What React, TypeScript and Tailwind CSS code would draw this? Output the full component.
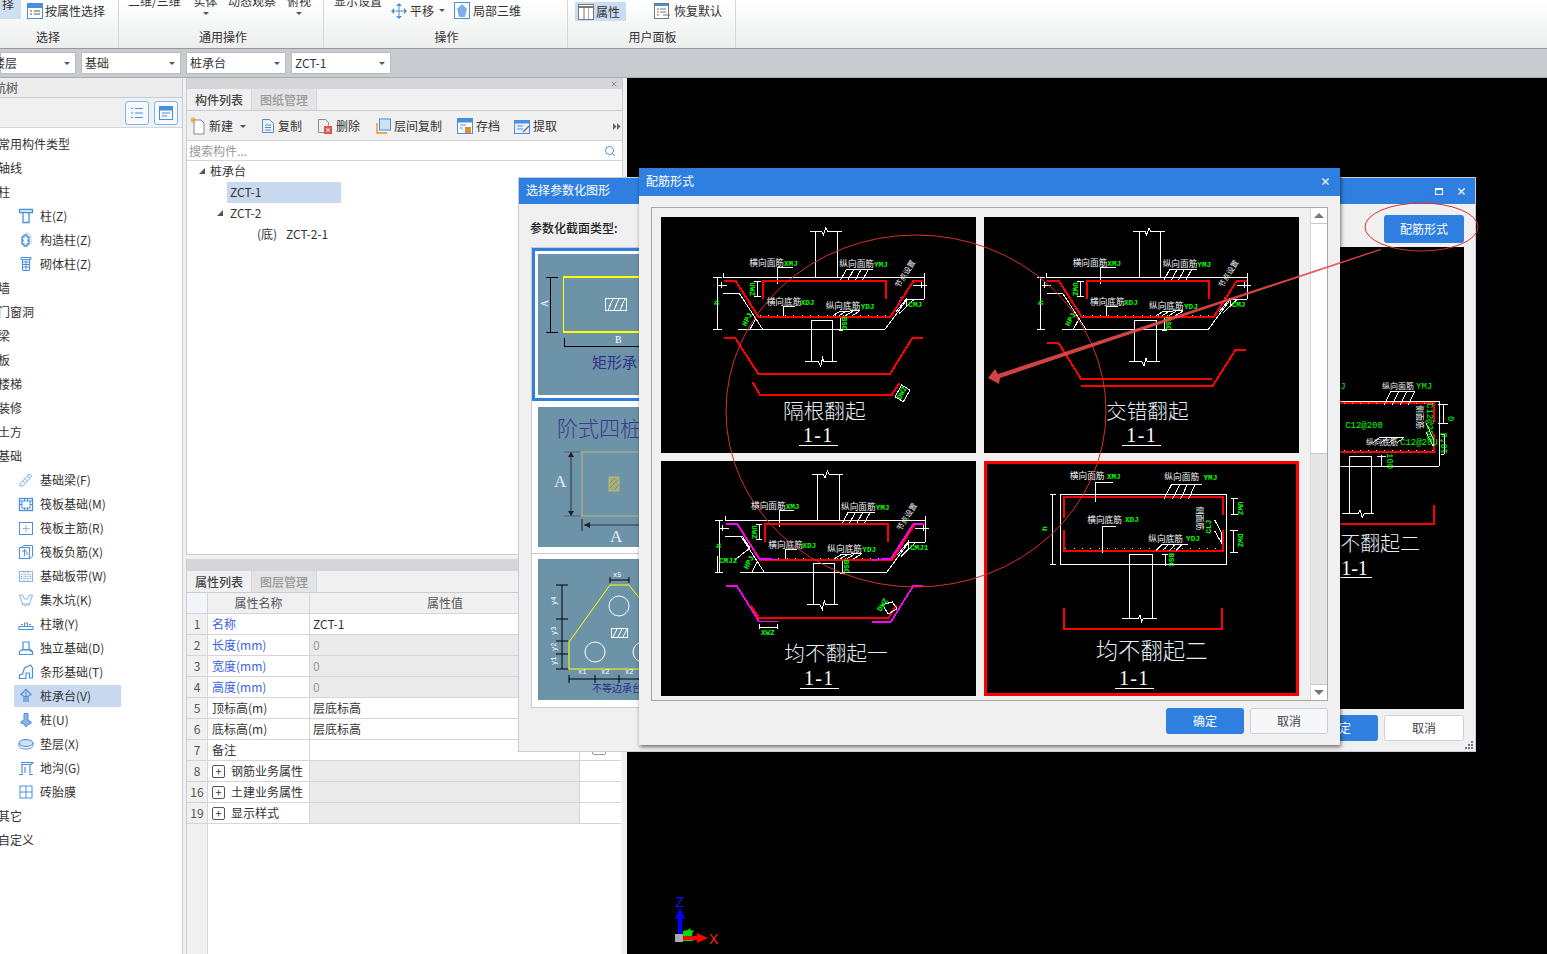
import React from "react";
import { X, Search } from "lucide-react";

const BLUE = "#4a90d9";
type IP = { children: React.ReactNode; s?: number };
const Ic = ({ children, s = 16 }: IP) => (
  <svg width={s} height={s} viewBox="0 0 16 16" fill="none" stroke={BLUE} strokeWidth="1" className="shrink-0">{children}</svg>
);

const navIcons: Record<string, React.ReactNode> = {
  zhu: <path d="M1.5 1.5h13v3h-13zM4 4.5h8M5 4.5v10h6v-10" strokeWidth="1.3" />,
  gz: <><path d="M6 3h3v2h2v3h-1v1h1v3H9v2H6v-2H4V9h1V8H4V5h2z" strokeWidth="1.3" /><path d="M7 1h3l3 3v8" stroke="#b8d0ec" /></>,
  qt: <><path d="M3 1.5h10v2H3zM4.5 3.5h7v11h-7z" /><path d="M4.5 6h7M4.5 8.5h7M4.5 11h7M8 3.5v11" /></>,
  jcl: <path d="M2 12l9-10 3 2-9 10H2zM9 4l3 2M6.5 7l3 2M4.5 9l3 2" stroke="#8ab4e4" />,
  kb: <><rect x="1.5" y="2.5" width="13" height="12" strokeWidth="1.3" /><rect x="4" y="5" width="8" height="7" /><path d="M1.5 5H4M1.5 8.5H4M12 5h2.5M12 8.5h2.5M6.5 2.5V5M9.5 2.5V5M6.5 12v2.5M9.5 12v2.5" /></>,
  zj: <><rect x="1.5" y="2.5" width="13" height="12" /><path d="M8 5v7M4.5 8.5h7" stroke="#8ab4e4" /></>,
  fj: <><rect x="1.5" y="3.5" width="10" height="11" /><path d="M3.5 3.5l2-2h9v11l-3 2M4 7h5M6.5 5v7M9 8v3" /></>,
  bd: <><rect x="1.5" y="3.5" width="13" height="10" stroke="#8ab4e4" /><path d="M6 3.5v10M10 3.5v10M3.5 6v5M8 6v5M12.5 6v5" strokeDasharray="1 1" /></>,
  jsk: <><path d="M1.5 3h3l2 4h3l2-4h3M1.5 3l3 9h7l3-9" stroke="#8ab4e4" /><path d="M4 12c2 2 6 2 8 0" strokeDasharray="1 1" /></>,
  zd: <><rect x="1" y="10.5" width="14" height="3" /><path d="M5 10.5h6M6.5 10.5V7h3v3.5M3 8.5h2M11 8.5h2" /></>,
  dl: <><path d="M5 2h6v8H5zM1.5 14.5v-3l3-2h8l2 2v3zM11 10l3.5 2" strokeWidth="1.2" /></>,
  tx: <path d="M1.5 14.5V11l3-1 2-6 6-3 2 3v10h-3V9H8v5.5z" strokeWidth="1.2" />,
  zct: <><path d="M8 1.5l5 5-3 2H6l-3-2zM6 9v5M10 9v5M8 4v10" strokeWidth="1.2" /></>,
  z: <path d="M6 1.5h4v7l3 1v2l-3 1-2 2.5L6 12l-3-1V9.500l3-1z" fill="#8ab4e4" />,
  dc: <><ellipse cx="8" cy="7" rx="7" ry="3.500" fill="#cfe0f3" /><path d="M1 7v2.500C1 11.500 4 13 8 13s7-1.500 7-3.500V7" /></>,
  dg: <><path d="M3 4.500h10M3 2.500h12l-2 2M4 4.500v9M12 4.500v9M1 14.500h4M11 14.500h4M7 7v6" strokeWidth="1.2" /></>,
  ztm: <><rect x="2" y="2" width="12" height="12" /><path d="M8 2v12M2 8h12" /></>,
};

const tree: [string, string, string?][] = [
  ["t", "常用构件类型"], ["t", "轴线"], ["t", "柱"],
  ["s", "柱(Z)", "zhu"], ["s", "构造柱(Z)", "gz"], ["s", "砌体柱(Z)", "qt"],
  ["t", "墙"], ["t", "门窗洞"], ["t", "梁"], ["t", "板"], ["t", "楼梯"], ["t", "装修"], ["t", "土方"], ["t", "基础"],
  ["s", "基础梁(F)", "jcl"], ["s", "筏板基础(M)", "kb"], ["s", "筏板主筋(R)", "zj"], ["s", "筏板负筋(X)", "fj"],
  ["s", "基础板带(W)", "bd"], ["s", "集水坑(K)", "jsk"], ["s", "柱墩(Y)", "zd"], ["s", "独立基础(D)", "dl"],
  ["s", "条形基础(T)", "tx"], ["s", "桩承台(V)", "zct"], ["s", "桩(U)", "z"], ["s", "垫层(X)", "dc"],
  ["s", "地沟(G)", "dg"], ["s", "砖胎膜", "ztm"],
  ["t", "其它"], ["t", "自定义"],
];

const Arrow = () => <span className="inline-block w-0 h-0 border-x-[3px] border-x-transparent border-t-[3px] border-t-[#555]" />;

const Ribbon = () => (
  <div className="h-[49px] flex shrink-0 bg-gradient-to-b from-white to-[#eceeee] border-b-[1px] border-[#96999c] text-[12px] leading-[16px] text-[#333]">
    <div className="w-[119px] border-r border-[#d4d6d8] flex flex-col">
      <div className="h-[28px] flex items-start overflow-hidden">
        <div className="w-[21px] h-[23px] bg-[#cfe0f3] -mt-[4px] pl-[2px] overflow-hidden shrink-0">择</div>
        <svg width="16" height="16" viewBox="0 0 16 16" className="ml-[6px] mt-[3px] shrink-0"><rect x="0.500" y="0.500" width="15" height="15" fill="#fff" stroke={BLUE} /><rect x="1" y="1" width="14" height="4" fill={BLUE} /><path d="M3 8h2M7 8h6M3 11h2M7 11h6" stroke="#555" /></svg>
        <span className="ml-[1px] mt-[3px] pl-[1px]">按属性选择</span>
      </div>
      <div className="text-center pr-[22px] leading-[18px]">选择</div>
    </div>
    <div className="w-[205px] border-r border-[#d4d6d8] flex flex-col">
      <div className="h-[28px] flex items-start overflow-hidden pl-[9px] -mt-[7px]">
        <span className="w-[65px] shrink-0">二维/三维</span>
        <span className="w-[25px] mr-[10px] flex flex-col items-center shrink-0"><span>实体</span><span className="h-[3px]" /><Arrow /></span>
        <span className="w-[59px] shrink-0">动态观察</span>
        <span className="flex flex-col items-center"><span>俯视</span><span className="h-[3px]" /><Arrow /></span>
      </div>
      <div className="text-center pl-[4px] leading-[18px] mt-[7px]">通用操作</div>
    </div>
    <div className="w-[244px] border-r border-[#d4d6d8] flex flex-col">
      <div className="h-[28px] relative overflow-hidden pl-[10px] flex items-start">
        <span className="-mt-[7px] w-[57px] shrink-0">显示设置</span>
        <svg width="16" height="16" viewBox="0 0 16 16" className="mt-[3px] shrink-0" fill={BLUE}><path d="M8 0l3 3H5zM8 16l-3-3h6zM0 8l3-3v6zM16 8l-3 3V5z" /><path d="M8 3v10M3 8h10" stroke={BLUE} /></svg>
        <span className="ml-[3px] mt-[3px]">平移</span>
        <span className="ml-[5px] mt-[9px] flex"><Arrow /></span>
        <svg width="16" height="17" viewBox="0 0 16 17" className="ml-[9px] mt-[2px] shrink-0"><rect x="0.500" y="0.500" width="15" height="16" fill="#fff" stroke={BLUE} /><path d="M8 2l5 5-2 8H5L3 7z" fill="#7eaee4" /></svg>
        <span className="ml-[3px] mt-[3px]">局部三维</span>
      </div>
      <div className="text-center pl-[2px] leading-[18px]">操作</div>
    </div>
    <div className="w-[168px] border-r border-[#d4d6d8] flex flex-col">
      <div className="h-[28px] flex items-start pl-[7px]">
        <div className="w-[51px] h-[19px] mt-[2px] bg-[#c9dcf2] flex items-center pl-[3px] shrink-0">
          <svg width="16" height="16" viewBox="0 0 16 16"><rect x="0.500" y="0.500" width="15" height="15" fill="#fff" stroke="#777" /><path d="M1 3h14" stroke="#777" strokeWidth="2" /><path d="M6 4v11" stroke="#777" /><path d="M10.500 4v11" stroke="#aaa" /></svg>
          <span className="ml-[2px]">属性</span>
        </div>
        <svg width="17" height="16" viewBox="0 0 17 16" className="ml-[28px] mt-[3px] shrink-0"><rect x="0.500" y="0.500" width="14" height="15" fill="#fff" stroke="#777" /><path d="M1 2h13" stroke={BLUE} strokeWidth="2" /><path d="M3 6h2M6 6h6M3 9h2M6 9h6M3 12h2M9 12h7" stroke="#777" /></svg>
        <span className="ml-[3px] mt-[3px]">恢复默认</span>
      </div>
      <div className="text-center pl-[2px] leading-[18px]">用户面板</div>
    </div>
  </div>
);

const Sel = ({ w, t, cls = "" }: { w: string; t: string; cls?: string }) => (
  <div className={`${w} ${cls} h-[22px] bg-white border border-[#b8bbbf] flex items-center justify-between pl-[3px] pr-[5px] shrink-0 text-[12px] text-[#333]`}>
    <span>{t}</span><Arrow />
  </div>
);

const Nav = () => (
  <div className="w-[186px] shrink-0 pr-[3px] flex flex-col">
    <div className="flex-1 flex flex-col border-r border-[#c8ccd4] bg-white text-[12px] text-[#333]">
      <div className="h-[20px] shrink-0 bg-[#ececec] border-b border-[#c8ccd4] flex items-center -ml-[6px] font-medium text-[#666]">航树</div>
      <div className="h-[30px] shrink-0 bg-[#f0f0f0] border-b border-[#d4d6da] flex items-center justify-end pr-[4px] gap-[5px]">
        {[0, 1].map((i) => (
          <div key={i} className="w-[24px] h-[24px] rounded-[3px] border border-[#7eb4ea] bg-[#f6f9fd] flex items-center justify-center">
            {i === 0 ? (
              <svg width="14" height="14" viewBox="0 0 14 14" stroke={BLUE} fill="none"><path d="M5 2.500h8M5 7h8M5 11.500h8M1 2.500h2M1 7h2M1 11.500h2" /></svg>
            ) : (
              <svg width="14" height="14" viewBox="0 0 14 14" stroke={BLUE} fill="none"><rect x="0.500" y="0.500" width="13" height="13" /><rect x="1" y="1" width="12" height="3" fill={BLUE} /><path d="M3 7h8M3 10h5" /></svg>
            )}
          </div>
        ))}
      </div>
      <div className="pt-[4px] flex flex-col overflow-hidden">
        {tree.map(([k, t, ic]) =>
          k === "t" ? (
            <div key={t} className="h-[24px] shrink-0 flex items-center -ml-[2px]">{t}</div>
          ) : (
            <div key={t} className="h-[24px] shrink-0 flex items-center">
              <div className={`ml-[14px] w-[107px] h-[22px] flex items-center pl-[4px] ${t === "桩承台(V)" ? "bg-[#c7d8ef]" : ""}`}>
                <Ic>{navIcons[ic as string]}</Ic>
                <span className="ml-[6px] whitespace-nowrap">{t}</span>
              </div>
            </div>
          )
        )}
      </div>
    </div>
  </div>
);

const MidTool = () => (
  <div className="h-[30px] shrink-0 bg-[#f0f0f0] border-b border-[#d4d6da] flex items-center relative pl-[3px] pt-[1px] text-[12px] text-[#333]">
    <svg width="18" height="18" viewBox="0 0 18 18" fill="none"><path d="M4 3h7l3 3v11H4z" fill="#fff" stroke="#888" /><path d="M3 0v6M0 3h6M1 1l4 4M5 1L1 5" stroke="#e6a83c" /></svg>
    <span className="ml-[1px]">新建</span>
    <span className="ml-[7px] flex"><Arrow /></span>
    <svg width="16" height="16" viewBox="0 0 16 16" fill="none" className="ml-[14px] mr-[2px]" stroke={BLUE}><path d="M2.500 1.500h7l4 4v9h-11z" /><path d="M5 7h6M5 9.500h6M5 12h6" /></svg>
    <span>复制</span>
    <svg width="16" height="16" viewBox="0 0 16 16" fill="none" className="ml-[15px]" stroke="#888"><path d="M1.500 1.500h7l3 3v3M1.500 1.500v13h6" /><rect x="7" y="8" width="8" height="8" fill="#e05050" stroke="none" /><path d="M9 10l4 4M13 10l-4 4" stroke="#fff" /></svg>
    <span className="ml-[3px]">删除</span>
    <svg width="16" height="16" viewBox="0 0 16 16" fill="none" className="ml-[15px]"><path d="M2 5v10h10" stroke="#e68a2e" strokeWidth="1.300" /><rect x="4.500" y="1" width="11" height="11" fill="#cfe0f3" stroke={BLUE} /></svg>
    <span className="ml-[2px] pl-[1px]">层间复制</span>
    <svg width="16" height="16" viewBox="0 0 16 16" fill="none" className="ml-[15px]" stroke={BLUE}><rect x="0.500" y="0.500" width="15" height="15" fill="#fff" /><rect x="1" y="1" width="14" height="3" fill={BLUE} /><rect x="8" y="9" width="6" height="6" fill="#e68a2e" stroke="none" /><path d="M3 7h6M3 10h3" /></svg>
    <span className="ml-[3px]">存档</span>
    <svg width="16" height="16" viewBox="0 0 16 16" fill="none" className="ml-[14px]" stroke={BLUE}><rect x="0.500" y="2.500" width="15" height="13" fill="#eaf2fb" /><rect x="1" y="3" width="14" height="2" fill={BLUE} /><path d="M3 8h6M3 11h6" /><path d="M9 14l6-6" stroke="#777" strokeWidth="1.500" /></svg>
    <span className="ml-[3px]">提取</span>
    <svg width="8" height="7" viewBox="0 0 8 7" fill="#666" className="absolute right-[1px] top-[12px]"><path d="M0 0l3.500 3.500L0 7zM4 0l3.500 3.500L4 7z" /></svg>
  </div>
);

const Tabs = ({ a, b }: { a: string; b: string }) => (
  <div className="h-[22px] shrink-0 flex bg-[#f0f0f0] border-b border-[#c8ccd4] text-[12px] font-medium">
    <div className="w-[65px] text-center leading-[21px] text-[#444] border-r border-[#d4d6da]">{a}</div>
    <div className="w-[65px] text-center leading-[21px] text-[#999] bg-[#e4e4e4] border-r border-[#d4d6da]">{b}</div>
  </div>
);

const rows: [string, string, string, number, boolean?][] = [
  ["1", "名称", "ZCT-1", 0],
  ["2", "长度(mm)", "0", 1],
  ["3", "宽度(mm)", "0", 1],
  ["4", "高度(mm)", "0", 1],
  ["5", "顶标高(m)", "层底标高", 2],
  ["6", "底标高(m)", "层底标高", 2],
  ["7", "备注", "", 2],
  ["8", "钢筋业务属性", "", 3],
  ["16", "土建业务属性", "", 3],
  ["19", "显示样式", "", 3],
];

const PropTable = () => (
  <div className="flex-1 flex flex-col bg-white text-[12px] text-[#333] leading-[20px] relative">
    <div className="grid grid-cols-[21px_102px_270px_41px] w-[434px] border-b border-[#d4d6da] h-[21px] shrink-0 bg-[#f0f0f0] text-[#555]">
      <div className="bg-[#f2f4f8] border-r border-[#d4d6da]" />
      <div className="border-r border-[#d4d6da] text-center">属性名称</div>
      <div className="text-center">属性值</div>
      <div />
    </div>
    {rows.map(([n, name, v, k]) => (
      <div key={n} className="grid grid-cols-[21px_102px_270px_41px] w-[434px] h-[21px] shrink-0 border-b border-[#d4d6da]">
        <div className="bg-[#f0f0f0] border-r border-[#d4d6da] text-center text-[#555]">{n}</div>
        <div className={`border-r border-[#d4d6da] pl-[4px] flex items-center whitespace-nowrap ${k <= 1 ? "text-[#3b62e0]" : ""}`}>
          {k === 3 && <span className="w-[13px] h-[13px] border border-[#555] rounded-[2px] flex items-center justify-center text-[11px] leading-[11px] mr-[6px]">+</span>}
          {name}
        </div>
        <div className={`border-r border-[#d4d6da] pl-[3px] ${k === 1 || k === 3 ? "bg-[#ebebeb]" : ""} ${k === 1 ? "text-[#999]" : ""}`}>{v}</div>
        <div className="relative">{n === "7" && <span className="absolute left-[12px] top-[4px] w-[14px] h-[11px] border border-[#999] rounded-[2px] bg-white" />}</div>
      </div>
    ))}
    <div className="flex-1 w-[434px] flex"><div className="w-[21px] bg-[#f0f0f0] border-r border-[#d4d6da]" /></div>
    <div className="absolute right-0 top-0 bottom-0 w-[2px] bg-[#f0f0f0]" />
  </div>
);

const Tri = () => <span className="w-0 h-0 border-l-[6px] border-l-transparent border-b-[6px] border-b-[#555] shrink-0" />;

const Mid = () => (
  <div className="w-[441px] shrink-0 pr-[4px] flex flex-col">
    <div className="h-[477px] shrink-0 border-x border-b border-[#c8ccd4] flex flex-col bg-white">
      <div className="h-[11px] shrink-0 bg-[#d4d6da] relative"><X size={8} strokeWidth={3} color="#888" className="absolute right-[4px] top-[2px]" /></div>
      <Tabs a="构件列表" b="图纸管理" />
      <MidTool />
      <div className="h-[20px] shrink-0 border-b border-[#d4d6da] flex items-center justify-between pl-[2px] pr-[6px] text-[12px] text-[#999]">
        <span>搜索构件...</span><Search size={12} color={BLUE} strokeWidth={2} />
      </div>
      <div className="flex-1 text-[12px] text-[#333] leading-[19px]">
        <div className="h-[21px] pl-[12px] flex items-center pb-[2px]"><Tri /><span className="ml-[5px]">桩承台</span></div>
        <div className="ml-[40px] w-[114px] h-[21px] bg-[#c7d8ef] pl-[3px]">ZCT-1</div>
        <div className="h-[21px] pl-[30px] flex items-center pb-[2px]"><Tri /><span className="ml-[7px]">ZCT-2</span></div>
        <div className="h-[21px] pl-[70px] flex"><span className="w-[29px]">(底)</span><span>ZCT-2-1</span></div>
      </div>
    </div>
    <div className="h-[4px] shrink-0" />
    <div className="flex-1 flex flex-col border-l border-[#c8ccd4]">
      <div className="h-[12px] shrink-0 bg-[#d4d6da]" />
      <Tabs a="属性列表" b="图层管理" />
      <PropTable />
    </div>
  </div>
);

/* ---------- CAD drawings (viewBox units are one third of a pixel) ---------- */
const wp = { fill: "none", stroke: "#fff", strokeWidth: 3 } as const;
const rp = { fill: "none", stroke: "#ff0000", strokeWidth: 6 } as const;
const mp = { fill: "none", stroke: "#ff00ff", strokeWidth: 5 } as const;
const L = ({ p }: { p: string }) => <polyline points={p} {...wp} />;
const R = ({ p }: { p: string }) => <polyline points={p} {...rp} />;
const M = ({ p }: { p: string }) => <polyline points={p} {...mp} />;
const cjk = "'Noto Sans CJK SC',sans-serif";
const mono = "'Liberation Mono',monospace";
const WT = ({ x, y, t, s = 26, r }: { x: number; y: number; t: string; s?: number; r?: number }) => (
  <text x={x} y={y} fill="#f2f6fa" fontSize={s} fontFamily={cjk} transform={r !== undefined ? `rotate(${r} ${x} ${y})` : undefined}>{t}</text>
);
const GT = ({ x, y, t, s = 23, r }: { x: number; y: number; t: string; s?: number; r?: number }) => (
  <text x={x} y={y} fill="#00ff00" fontSize={s} fontWeight={700} fontFamily={mono} transform={r !== undefined ? `rotate(${r} ${x} ${y})` : undefined}>{t}</text>
);
const Title = ({ cx, y, t, s = 62, ucx, uy }: { cx: number; y: number; t: string; s?: number; ucx: number; uy: number }) => (
  <>
    <text x={cx} y={y} textAnchor="middle" fill="#e6eef5" fontSize={s} fontWeight={300} fontFamily={cjk}>{t}</text>
    <text x={ucx} y={uy} textAnchor="middle" fill="#fff" fontSize={60} letterSpacing="4" fontFamily="'Liberation Serif',serif">1-1</text>
    <polyline points={`${ucx - 58},${uy + 10} ${ucx + 58},${uy + 10}`} {...wp} />
  </>
);

const Common = ({ cmj = "CMJ" }: { cmj?: string }) => (
  <>
    <L p="497,217 497,80" /><L p="562,217 562,80" />
    <L p="480,78 515,78 520,90 527,68 532,78 575,78" />
    <L p="220,205 220,217 822,217" /><L p="822,205 822,282" />
    <L p="220,265 268,265 338,373 265,373 705,373 770,285 822,282" />
    <L p="190,217 215,217" /><L p="190,373 215,373" /><L p="202,217 202,373" />
    <L p="205,240 232,240" /><L p="213,232 213,248" />
    <L p="790,240 832,240" /><L p="814,230 814,250" />
    <L p="484,373 484,347 548,347 548,373" /><L p="484,373 484,470" /><L p="548,373 548,470" />
    <L p="466,470 505,470 512,484 518,458 522,470 560,470" />
    <L p="318,340 300,373" />
    <L p="322,228 322,275" /><L p="312,228 332,228" /><L p="312,275 332,275" />
    <L p="572,338 572,375" /><L p="566,338 580,338" /><L p="566,375 580,375" />
    <L p="382,238 382,186 428,186" />
    <L p="590,192 670,192" /><L p="568,232 590,192" /><L p="590,232 612,192" /><L p="612,232 634,192" /><L p="634,232 656,192" />
    <L p="400,340 400,303 435,303" />
    <L p="570,319 630,317" /><L p="548,332 570,319" /><L p="566,332 588,319" /><L p="586,332 608,319" /><L p="606,332 628,319" />
    <L p="738,320 772,278" /><L p="748,325 790,285" />
    <polyline points="340,228 708,228" fill="none" stroke="#ffff00" strokeWidth="3" strokeDasharray="3 22" />
    <polyline points="330,331 722,331" fill="none" stroke="#ffff00" strokeWidth="3" strokeDasharray="3 22" />
    <R p="340,283 340,228 708,228 708,282" />
    <R p="222,228 257,228 325,335 722,335 790,228 820,228" />
    <L p="770,285 770,305" />
    <WT x={298} y={182} t="横向面筋" /><GT x={402} y={183} t="XMJ" />
    <WT x={568} y={186} t="纵向面筋" /><GT x={672} y={185} t="YMJ" />
    <WT x={350} y={300} t="横向底筋" /><GT x={452} y={299} t="XDJ" />
    <WT x={527} y={312} t="纵向底筋" /><GT x={632} y={311} t="YDJ" />
    <WT x={748} y={250} t="节点设置" s={23} r={-58} />
    <GT x={775} y={307} t={cmj} />
    <GT x={300} y={232} t="UWZ" r={90} />
    <GT x={208} y={300} t="h" r={-90} s={24} />
    <GT x={288} y={365} t="HPJ" r={-62} />
    <GT x={577} y={335} t="BSC" r={90} />
    <polyline points="740,310 756,270" fill="none" stroke="#ff00ff" strokeWidth="3" strokeDasharray="3 8" />
  </>
);

const DrawA = () => (
  <svg viewBox="33 36 945 708" className="block w-full h-full" shapeRendering="crispEdges">
    <Common />
    <R p="222,398 255,398 325,507 720,507 788,398 820,398" />
    <R p="307,530 330,570 725,570 748,535" />
    <L p="735,575 755,540 780,555 760,590 735,575" />
    <GT x={752} y={585} t="DWZ" r={-62} />
    <Title cx={523} y={643} t="隔根翻起" ucx={505} uy={710} />
  </svg>
);
const DrawB = () => (
  <svg viewBox="12 6 945 708" className="block w-full h-full" shapeRendering="crispEdges">
    <g transform="translate(-20 -30)"><Common /></g>
    <R p="202,383 235,383 303,492 695,492" />
    <R p="303,513 698,513 766,405 797,405" />
    <Title cx={502} y={612} t="交错翻起" ucx={485} uy={680} />
  </svg>
);
const DrawC = () => (
  <svg viewBox="18 9 945 705" className="block w-full h-full" shapeRendering="crispEdges">
    <g transform="translate(-10 -30)"><Common cmj="CMJ1" /></g>
    <M p="213,198 247,198 312,302 368,305" />
    <M p="652,306 708,302 775,198 803,198" />
    <M p="213,383 245,383 312,490 368,490" />
    <R p="288,443 312,480 700,480 725,440" />
    <M p="652,491 708,491 775,383 803,383" />
    <L p="312,497 312,514" /><L p="368,497 368,514" /><L p="312,508 368,508" />
    <L p="262,235 285,270 240,305" /><L p="188,295 188,343" />
    <L p="682,440 712,432 726,452 700,468 682,440" />
    <GT x={192} y={315} t="CMJ2" />
    <GT x={318} y={530} t="XWZ" />
    <GT x={678} y={462} t="DWZ" r={-58} />
    <Title cx={543} y={610} t="均不翻起一" s={62} ucx={493} uy={680} />
  </svg>
);
const DrawD = () => (
  <svg viewBox="22 28 925 681" className="block w-full h-full" shapeRendering="crispEdges">
    <L p="241,118 740,118 740,328 241,328 241,118" />
    <polyline points="256,127 722,127" fill="none" stroke="#ffff00" strokeWidth="3" strokeDasharray="3 22" />
    <polyline points="256,280 722,280" fill="none" stroke="#ffff00" strokeWidth="3" strokeDasharray="3 22" />
    <R p="252,187 252,126 727,126 727,178" />
    <R p="252,222 252,287 727,287 727,222" />
    <L p="449,488 449,296 517,296 517,488" />
    <L p="427,488 475,488 480,478 485,498 490,488 530,488" />
    <L p="218,118 218,328" /><L p="210,118 230,118" /><L p="210,328 230,328" />
    <L p="760,128 760,178" /><L p="752,128 772,128" /><L p="752,178 772,178" />
    <L p="760,225 760,290" /><L p="750,225 772,225" /><L p="750,290 772,290" />
    <L p="347,140 347,82 398,82" />
    <L p="575,86 665,86" /><L p="552,130 575,86" /><L p="577,130 600,86" /><L p="602,130 622,86" /><L p="626,130 645,86" />
    <L p="367,292 367,212 408,212" />
    <L p="545,267 625,267" /><L p="528,285 545,267" /><L p="548,285 565,267" /><L p="568,285 585,267" /><L p="588,285 605,267" />
    <L p="703,192 724,232 724,262 703,225" />
    <L p="555,296 555,330" /><L p="545,296 565,296" />
    <R p="252,457 252,521 726,521 726,457" />
    <WT x={270} y={72} t="横向面筋" /><GT x={381} y={71} t="XMJ" />
    <WT x={553} y={75} t="纵向面筋" /><GT x={670} y={74} t="YMJ" />
    <WT x={322} y={201} t="横向底筋" /><GT x={435} y={200} t="XDJ" />
    <WT x={505} y={258} t="纵向底筋" /><GT x={618} y={256} t="YDJ" />
    <WT x={651} y={152} t="侧面筋" s={24} r={90} />
    <GT x={692} y={234} t="CLJ" r={-90} />
    <GT x={202} y={226} t="h" r={-90} s={24} />
    <GT x={772} y={138} t="UWZ" r={90} />
    <GT x={772} y={234} t="DWZ" r={90} />
    <GT x={566} y={292} t="BSC" r={90} />
    <Title cx={515} y={610} t="均不翻起二" s={67} ucx={463} uy={687} />
  </svg>
);

const BackDrawing = () => {
  const u = { fill: "none", stroke: "#fff", strokeWidth: 1 } as const;
  const v = { fill: "none", stroke: "#ff0000", strokeWidth: 2 } as const;
  const t = (x: number, y: number, s: string, c: string, fs = 9, r?: number, f = mono) => (
    <text key={s + x} x={x} y={y} fill={c} fontSize={fs} fontFamily={f} transform={r ? `rotate(${r} ${x} ${y})` : undefined}>{s}</text>
  );
  return (
    <svg viewBox="650 247 814 462" className="block w-full h-full" shapeRendering="crispEdges">
      <polyline points="1200,401 1439,401 1439,466 1200,466" {...u} />
      <polyline points="1200,403 1434,403 1434,422" {...v} />
      <polyline points="1434,434 1434,452 1200,452" {...v} />
      <polyline points="1200,403 1434,403" fill="none" stroke="#ff0" strokeWidth="1" strokeDasharray="1 7" />
      <polyline points="1200,450 1434,450" fill="none" stroke="#ff0" strokeWidth="1" strokeDasharray="1 7" />
      <polyline points="1349,514 1349,456 1371,456 1371,514" {...u} />
      <polyline points="1342,514 1358,514 1360,510 1362,518 1364,514 1374,514" {...u} />
      {[1384, 1392, 1400, 1408].map((x) => <polyline key={x} points={`${x},405 ${x + 7},391`} {...u} />)}
      <polyline points="1391,391 1415,391" {...u} />
      {[1373, 1381, 1389, 1397].map((x) => <polyline key={x} points={`${x},443 ${x + 7},437`} {...u} />)}
      <polyline points="1380,437 1403,437" {...u} />
      <polyline points="1426,423 1433,438 1433,446 1426,432" {...u} />
      <polyline points="1443,404 1443,423" {...u} /><polyline points="1438,404 1448,404" {...u} /><polyline points="1438,423 1448,423" {...u} />
      <polyline points="1441,434 1444,434 1444,454 1441,454" {...u} />
      <polyline points="1381,455 1381,467" {...u} /><polyline points="1377,456 1386,456" {...u} />
      <polyline points="1434,505 1434,524 1200,524" {...v} />
      {t(1382, 389, "纵向面筋", "#f2f6fa", 8, undefined, cjk)}
      {t(1340, 389, "J", "#00ff00")}{t(1416, 389, "YMJ", "#00ff00")}
      {t(1345, 428, "C12@200", "#00ff00")}
      {t(1366, 445, "纵向底筋", "#f2f6fa", 8, undefined, cjk)}
      {t(1400, 445, "C12@20U", "#00ff00")}
      {t(1427, 403, "C12@200", "#00ff00", 9, 90)}
      {t(1417, 405, "侧面筋", "#f2f6fa", 8, 90, cjk)}
      {t(1387, 453, "100", "#00ff00", 9, 90)}
      {t(1448, 416, "0", "#00ff00", 9, 90)}
      {t(1447, 454, "10*d", "#00ff00", 9, -90)}
      <text x="1420" y="551" textAnchor="end" fill="#e6eef5" fontSize="20" fontWeight={300} fontFamily={cjk}>均不翻起二</text>
      <text x="1341" y="575" fill="#fff" fontSize="20" fontFamily="'Liberation Serif',serif">1-1</text>
      <polyline points="1300,578 1372,578" {...u} />
    </svg>
  );
};

/* ---------- section thumbnails ---------- */
const ThumbA = () => (
  <svg width="210" height="141" viewBox="0 0 210 141" className="block bg-[#6d93a8]" shapeRendering="crispEdges">
    <g fill="none" stroke="#000"><path d="M12.500 23v55M8 23h12M8 78h12M26 84v9M26 92h180" /></g>
    <rect x="25.500" y="23" width="180" height="55" fill="none" stroke="#ff0" strokeWidth="1.500" />
    <rect x="67.500" y="44.500" width="21" height="12" fill="none" stroke="#fff" />
    <path d="M70 56l5-11M76 56l5-11M82 56l5-11" stroke="#fff" />
    <text x="10" y="53" fill="#fff" fontSize="10" fontFamily="'Liberation Serif',serif" transform="rotate(-90 10 53)">A</text>
    <text x="77" y="89" fill="#fff" fontSize="10" fontFamily="'Liberation Serif',serif">B</text>
    <text x="54" y="114" fill="#2f2f88" fontSize="15" fontFamily={cjk}>矩形承台</text>
  </svg>
);
const ThumbB = () => (
  <svg width="210" height="140" viewBox="0 0 210 140" className="block bg-[#6d93a8]">
    <text x="19" y="29" fill="#3a3a8c" fontSize="21" fontWeight={300} fontFamily={cjk}>阶式四桩承台</text>
    <rect x="44" y="45" width="140" height="64" fill="none" stroke="#b7bb72" />
    <rect x="71" y="70" width="10" height="14" fill="#a9ad70" stroke="#b7bb72" />
    <path d="M72 76l5-5M72 81l8-8M76 83l5-5" stroke="#6d93a8" />
    <path d="M33 45v64" stroke="#4d6270" strokeWidth="2" />
    <path d="M26 45h16M26 109h16" stroke="#4d6270" />
    <path d="M30 50l3-5 3 5zM30 104l3 5 3-5z" fill="#222" />
    <path d="M46 118h150" stroke="#4d6270" strokeWidth="2" />
    <path d="M44 112v12" stroke="#222" />
    <path d="M46 118l6-3v6z" fill="#222" />
    <text x="16" y="80" fill="#e8eef2" fontSize="17" fontFamily="'Liberation Serif',serif">A</text>
    <text x="72" y="135" fill="#e8eef2" fontSize="17" fontFamily="'Liberation Serif',serif">A</text>
  </svg>
);
const ThumbC = () => (
  <svg width="210" height="141" viewBox="0 0 210 141" className="block bg-[#6d93a8]">
    <path d="M31 110V83l41-57h19l19 24 20 33v27z" fill="none" stroke="#ff0" />
    <circle cx="81" cy="47" r="10" fill="none" stroke="#fff" />
    <circle cx="57" cy="93" r="10" fill="none" stroke="#fff" />
    <circle cx="105" cy="93" r="10" fill="none" stroke="#fff" />
    <rect x="73.500" y="69.500" width="16" height="9" fill="none" stroke="#fff" />
    <path d="M75 78l4-8M80 78l4-8M85 78l4-8" stroke="#fff" />
    <g stroke="#000" fill="none"><path d="M24 26v84M18 26h12M18 60h12M18 82h12M18 95h12M18 110h12M31 120h100M31 116v8M57 116v8M81 116v8M105 116v8M72 21h19M72 18v6M91 18v6" /></g>
    <g fill="#fff" fontSize="7" fontFamily={mono}>
      <text x="75" y="18">x5</text><text x="40" y="115">x1</text><text x="63" y="115">x2</text><text x="87" y="115">x2</text>
      <text x="18" y="46" transform="rotate(-90 18 46)">y4</text><text x="18" y="76" transform="rotate(-90 18 76)">y3</text>
      <text x="18" y="92" transform="rotate(-90 18 92)">y2</text><text x="18" y="106" transform="rotate(-90 18 106)">y1</text>
    </g>
    <text x="54" y="133" fill="#2f2f88" fontSize="10" fontFamily={cjk}>不等边承台</text>
  </svg>
);

const BackDialog = () => (
  <div className="absolute left-[518px] top-[177px] w-[958px] h-[575px] bg-[#f0f0f0] border border-[#c8ccd8] flex flex-col text-[12px] text-[#333]">
    <div className="h-[26px] shrink-0 bg-[#2e7fe0] text-white flex items-center justify-between pl-[7px] pr-[8px] pb-[2px]">
      <span>选择参数化图形</span>
      <div className="flex items-center gap-[13px] pt-[2px]">
        <span className="w-[8px] h-[7px] border border-white border-t-[2px]" />
        <X size={11} color="#fff" strokeWidth={2.5} />
      </div>
    </div>
    <div className="flex-1 flex min-h-0">
      <div className="w-[120px] shrink-0 pl-[12px] overflow-hidden">
        <div className="h-[43px] flex items-end pb-[10px] -ml-[1px] whitespace-nowrap text-[#222] font-medium">参数化截面类型:</div>
        <div className="w-[240px] h-[461px] bg-white border border-[#c8ccd0] overflow-hidden">
          <div className="border-[3px] border-[#2e7fe0] p-[3px] h-[153px]"><ThumbA /></div>
          <div className="h-[153px] border-b border-[#c8ccd0] pl-[6px] pt-[6px]"><ThumbB /></div>
          <div className="pl-[6px] pt-[5px]"><ThumbC /></div>
        </div>
      </div>
      <div className="flex-1 flex flex-col pr-[11px]">
        <div className="h-[43px] shrink-0 flex justify-end pt-[11px]">
          <div className="w-[80px] h-[28px] rounded-[3px] bg-[#2e7fe0] text-white text-center leading-[28px]">配筋形式</div>
        </div>
        <div className="h-[462px] shrink-0 ml-[12px] bg-black overflow-hidden"><BackDrawing /></div>
        <div className="flex justify-end gap-[6px] pt-[6px]">
          <div className="w-[78px] h-[26px] rounded-[3px] bg-[#2e7fe0] text-white text-center leading-[26px]">确定</div>
          <div className="w-[80px] h-[26px] rounded-[3px] bg-white border border-[#c8d0dc] text-center leading-[24px] text-[#444]">取消</div>
        </div>
      </div>
    </div>
    <svg width="8" height="8" viewBox="0 0 8 8" className="absolute right-[2px] bottom-[2px]" fill="#777"><rect x="6" y="0" width="2" height="2" /><rect x="3" y="3" width="2" height="2" /><rect x="6" y="3" width="2" height="2" /><rect x="0" y="6" width="2" height="2" /><rect x="3" y="6" width="2" height="2" /><rect x="6" y="6" width="2" height="2" /></svg>
  </div>
);

const FrontDialog = () => (
  <div className="absolute left-[639px] top-[168px] w-[701px] h-[577px] bg-[#f0f0f0] shadow-[1px_2px_4px_rgba(0,0,0,0.55)] flex flex-col text-[12px] text-[#333]">
    <div className="h-[28px] shrink-0 bg-[#2e7fe0] text-white flex items-center justify-between pl-[7px] pr-[9px] pb-[2px]">
      <span>配筋形式</span><X size={11} color="#fff" strokeWidth={2.5} />
    </div>
    <div className="h-[494px] mx-[12px] mt-[11px] shrink-0 border border-[#a4a6a8] flex">
      <div className="w-[658px] pl-[9px] pt-[9px] grid grid-cols-[315px_315px] gap-[8px] grid-rows-[236px_235px] shrink-0 content-start">
        <div className="bg-black"><DrawA /></div>
        <div className="bg-black"><DrawB /></div>
        <div className="bg-black"><DrawC /></div>
        <div className="bg-black border-[3px] border-[#ff0000]"><DrawD /></div>
      </div>
      <div className="flex-1 flex flex-col border-l border-[#d8d8d8] bg-[#e6e6e6]">
        <div className="h-[16px] shrink-0 bg-white border-b border-[#c8c8c8] flex items-center justify-center">
          <span className="w-0 h-0 border-x-[5px] border-x-transparent border-b-[5px] border-b-[#777]" />
        </div>
        <div className="h-[230px] shrink-0 bg-white border-b border-[#c8c8c8]" />
        <div className="flex-1" />
        <div className="h-[16px] shrink-0 bg-white border-t border-[#c8c8c8] flex items-center justify-center">
          <span className="w-0 h-0 border-x-[5px] border-x-transparent border-t-[5px] border-t-[#777]" />
        </div>
      </div>
    </div>
    <div className="flex justify-end gap-[6px] mt-[7px] pr-[12px]">
      <div className="w-[78px] h-[26px] rounded-[3px] bg-[#2e7fe0] text-white text-center leading-[26px]">确定</div>
      <div className="w-[78px] h-[26px] rounded-[3px] bg-[#f6f7f9] border border-[#c8d0dc] text-center leading-[24px] text-[#444]">取消</div>
    </div>
  </div>
);

const Annotations = () => (
  <svg width="1547" height="954" viewBox="0 0 1547 954" className="absolute left-0 top-0 pointer-events-none" fill="none">
    <ellipse cx="916" cy="411" rx="190" ry="176" stroke="#d8302f" strokeWidth="1" />
    <ellipse cx="1421.500" cy="227" rx="56.500" ry="24" stroke="#d8302f" strokeWidth="1" />
    <polygon points="1380,249 1381,250 1000,378 999,384 988,378 995,369 998,374" fill="#e84a4a" fillOpacity="0.9" />
  </svg>
);

const Gizmo = () => (
  <svg width="60" height="60" viewBox="670 893 60 60" className="absolute left-[43px] top-[815px]">
    <path d="M678 935v-16h-3l5-11 5 11h-3v16z" fill="#0000ff" />
    <path d="M683 931l5-1 2-2 1 3 3-1-2 4 1 7h-10z" fill="#00e000" />
    <rect x="675" y="934" width="8" height="8" fill="#aaa" />
    <path d="M683 936h14v-3l11 5-11 5v-3h-14z" fill="#ff0000" />
    <text x="675.500" y="907" fill="#1010ff" fontSize="14" fontFamily="'Liberation Sans',sans-serif">Z</text>
    <text x="709" y="944" fill="#ff2020" fontSize="14" fontFamily="'Liberation Sans',sans-serif">X</text>
  </svg>
);

export default function App() {
  return (
    <div className="relative w-[1547px] h-[954px] overflow-hidden flex flex-col bg-[#f0f0f0] [font-family:'Noto_Sans_CJK_SC',sans-serif]">
      <Ribbon />
      <div className="h-[29px] shrink-0 bg-[#c8cbd0] border-b border-[#a8abb0] flex items-center text-[#333] relative">
        <Sel w="w-[76px]" t="" />
        <span className="absolute left-[-7px] top-[6px] text-[12px] leading-[16px]">楼层</span>
        <div className="w-[5px] shrink-0" />
        <Sel w="w-[100px]" t="基础" />
        <div className="w-[5px] shrink-0" />
        <Sel w="w-[100px]" t="桩承台" />
        <div className="w-[5px] shrink-0" />
        <Sel w="w-[100px]" t="ZCT-1" />
      </div>
      <div className="flex-1 flex min-h-0">
        <Nav />
        <Mid />
        <div className="flex-1 bg-black relative"><Gizmo /></div>
      </div>
      <BackDialog />
      <FrontDialog />
      <Annotations />
    </div>
  );
}
